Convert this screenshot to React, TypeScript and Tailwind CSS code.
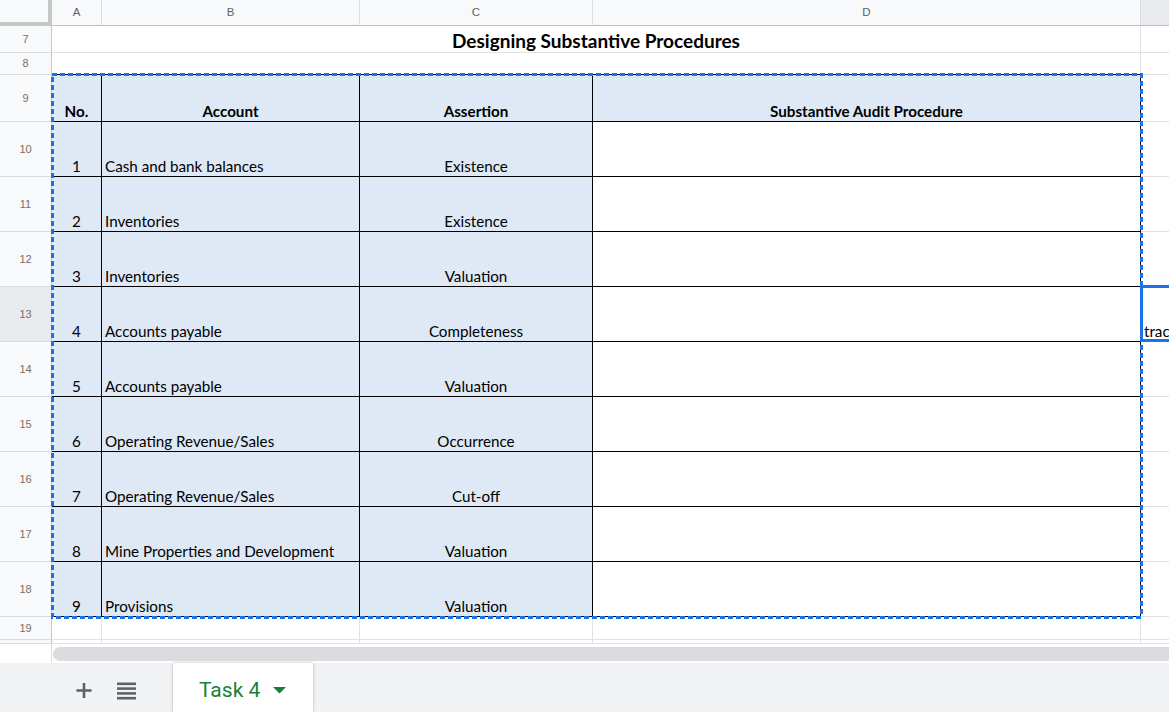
import React from "react";

const rows = [
  { no: 1, account: "Cash and bank balances", assertion: "Existence" },
  { no: 2, account: "Inventories", assertion: "Existence" },
  { no: 3, account: "Inventories", assertion: "Valuation" },
  { no: 4, account: "Accounts payable", assertion: "Completeness" },
  { no: 5, account: "Accounts payable", assertion: "Valuation" },
  { no: 6, account: "Operating Revenue/Sales", assertion: "Occurrence" },
  { no: 7, account: "Operating Revenue/Sales", assertion: "Cut-off" },
  { no: 8, account: "Mine Properties and Development", assertion: "Valuation" },
  { no: 9, account: "Provisions", assertion: "Valuation" },
];

const cellFont = "font-[Lato,sans-serif] text-[15.2px] leading-[18px] text-black";

function RowHeader({ label, active }: { label?: string; active?: boolean }) {
  return (
    <div
      className={`w-[52px] shrink-0 border-r border-b border-r-[#c4c7c5] border-b-[#dadce0] flex items-center justify-center font-['Liberation_Sans',Arial,sans-serif] text-[11px] text-[#7a6f66] ${
        active ? "bg-[#e8eaed]" : "bg-[#f8f9fa]"
      }`}
    >
      {label}
    </div>
  );
}

function ColHeader({ label, w, active }: { label: string; w: string; active?: boolean }) {
  return (
    <div
      className={`${w} shrink-0 border-r border-r-[#dadce0] border-b border-b-[#c0c0c0] flex items-center justify-center ${
        active ? "bg-[#e8eaed]" : "bg-[#f8f9fa]"
      }`}
    >
      {label}
    </div>
  );
}

export default function App() {
  return (
    <div className="relative w-[1169px] h-[712px] overflow-hidden bg-white flex flex-col">
      {/* column headers */}
      <div className="flex h-[26px] shrink-0 font-['Liberation_Sans',Arial,sans-serif] text-[11.5px] text-[#5f6368]">
        <div className="w-[52px] shrink-0 bg-[#f8f9fa] border-r-4 border-b-4 border-[#c4c7c5]" />
        <ColHeader label="A" w="w-[50px]" />
        <ColHeader label="B" w="w-[258px]" />
        <ColHeader label="C" w="w-[233px]" />
        <ColHeader label="D" w="w-[548px]" />
        <div className="flex-1 bg-[#e8eaed] border-b border-b-[#c0c0c0]" />
      </div>

      {/* row 7 - title */}
      <div className="flex h-[27px] shrink-0">
        <RowHeader label="7" />
        <div className="w-[1089px] shrink-0 border-r border-b border-[#e2e2e2] flex items-end justify-center font-[Lato,sans-serif] font-bold text-[19px] leading-[22px] text-black">
          Designing Substantive Procedures
        </div>
        <div className="flex-1 border-b border-[#e2e2e2]" />
      </div>

      {/* row 8 */}
      <div className="flex h-[22px] shrink-0">
        <RowHeader label="8" />
        <div className="w-[1089px] shrink-0 border-r border-r-[#e2e2e2] border-b border-b-black" />
        <div className="flex-1 border-b border-[#e2e2e2]" />
      </div>

      {/* row 9 - table head */}
      <div className="flex h-[47px] shrink-0">
        <RowHeader label="9" />
        <div className={`w-[50px] shrink-0 bg-[#dee9f5] border-r border-b border-black flex items-end justify-center pb-[1px] font-bold ${cellFont}`}>
          No.
        </div>
        <div className={`w-[258px] shrink-0 bg-[#dee9f5] border-r border-b border-black flex items-end justify-center pb-[1px] font-bold ${cellFont}`}>
          Account
        </div>
        <div className={`w-[233px] shrink-0 bg-[#dee9f5] border-r border-b border-black flex items-end justify-center pb-[1px] font-bold ${cellFont}`}>
          Assertion
        </div>
        <div className={`w-[548px] shrink-0 bg-[#dee9f5] border-r border-b border-black flex items-end justify-center pb-[1px] font-bold ${cellFont}`}>
          Substantive Audit Procedure
        </div>
        <div className="flex-1 border-b border-[#e2e2e2]" />
      </div>

      {/* rows 10-18 */}
      {rows.map((r, i) => {
        const rowNum = 10 + i;
        const selected = rowNum === 13;
        return (
          <div key={r.no} className="flex h-[55px] shrink-0">
            <RowHeader label={String(rowNum)} active={selected} />
            <div className={`w-[50px] shrink-0 bg-[#dee9f5] border-r border-b border-black flex items-end justify-center pb-[1px] ${cellFont}`}>
              {r.no}
            </div>
            <div className={`w-[258px] shrink-0 bg-[#dee9f5] border-r border-b border-black flex items-end pl-[3px] pb-[1px] whitespace-nowrap ${cellFont}`}>
              {r.account}
            </div>
            <div className={`w-[233px] shrink-0 bg-[#dee9f5] border-r border-b border-black flex items-end justify-center pb-[1px] ${cellFont}`}>
              {r.assertion}
            </div>
            <div className="w-[548px] shrink-0 bg-white border-r border-b border-black" />
            <div className={`relative flex-1 border-b border-[#e2e2e2] flex items-end pl-[3px] pb-[1px] overflow-visible whitespace-nowrap ${cellFont}`}>
              {selected && (
                <>
                  <span>trac</span>
                  <div className="absolute -left-px -top-[2px] -right-2 -bottom-px border-[3px] border-[#1a73e8]" />
                </>
              )}
            </div>
          </div>
        );
      })}

      {/* row 19 */}
      <div className="flex h-[23px] shrink-0">
        <RowHeader label="19" />
        <div className="w-[50px] shrink-0 border-r border-b border-[#e2e2e2]" />
        <div className="w-[258px] shrink-0 border-r border-b border-[#e2e2e2]" />
        <div className="w-[233px] shrink-0 border-r border-b border-[#e2e2e2]" />
        <div className="w-[548px] shrink-0 border-r border-b border-[#e2e2e2]" />
        <div className="flex-1 border-b border-[#e2e2e2]" />
      </div>

      {/* row 20 sliver */}
      <div className="flex h-[4px] shrink-0">
        <div className="w-[52px] shrink-0 bg-[#f8f9fa] border-r border-b border-r-[#c4c7c5] border-b-[#dadce0]" />
        <div className="w-[50px] shrink-0 border-r border-b border-[#e2e2e2]" />
        <div className="w-[258px] shrink-0 border-r border-b border-[#e2e2e2]" />
        <div className="w-[233px] shrink-0 border-r border-b border-[#e2e2e2]" />
        <div className="w-[548px] shrink-0 border-r border-b border-[#e2e2e2]" />
        <div className="flex-1 border-b border-[#e2e2e2]" />
      </div>

      {/* horizontal scrollbar */}
      <div className="flex h-[18px] shrink-0">
        <div className="w-[52px] shrink-0 border-r border-[#dadce0]" />
        <div className="flex-1 pt-[3px] pl-px">
          <div className="h-[14px] rounded-l-full bg-[#dadce0]" />
        </div>
      </div>

      {/* sheet tabs */}
      <div className="flex h-[50px] shrink-0 bg-[#f1f3f4] border-t border-white">
        <div className="w-[173px] shrink-0 flex items-center pt-[6px]">
          <div className="ml-[71px] w-[26px] h-[26px] flex items-center justify-center">
            <svg width="27" height="27" viewBox="0 0 24 24" fill="#5f6368">
              <path d="M19 13.2h-5.8V19h-2.4v-5.8H5v-2.4h5.8V5h2.4v5.8H19z" />
            </svg>
          </div>
          <div className="ml-[20px] flex items-center">
            <svg width="19" height="18" viewBox="0 0 19 18" fill="#5f6368">
              <rect x="0" y="0.5" width="19" height="2.6" />
              <rect x="0" y="5.3" width="19" height="2.6" />
              <rect x="0" y="10.1" width="19" height="2.6" />
              <rect x="0" y="14.9" width="19" height="2.6" />
            </svg>
          </div>
        </div>
        <div className="w-[140px] shrink-0 bg-white shadow-[0_0_3px_rgba(60,64,67,0.35)] flex items-center pt-[5px] pl-[26px] gap-[13px]">
          <span className="font-[Roboto,sans-serif] text-[21px] text-[#188038] leading-none">Task 4</span>
          <svg width="13" height="7" viewBox="0 0 13 7" fill="#188038">
            <polygon points="0,0 13,0 6.5,6.5" />
          </svg>
        </div>
        <div className="flex-1" />
      </div>

      {/* copy marquee around A9:D18 */}
      <svg
        className="absolute left-[50px] top-[72px] pointer-events-none"
        width="1094"
        height="548"
        shapeRendering="crispEdges"
      >
        <rect
          x="2"
          y="2"
          width="1089"
          height="543"
          fill="none"
          stroke="#1a73e8"
          strokeWidth="3"
          strokeDasharray="5 3"
        />
      </svg>
    </div>
  );
}
